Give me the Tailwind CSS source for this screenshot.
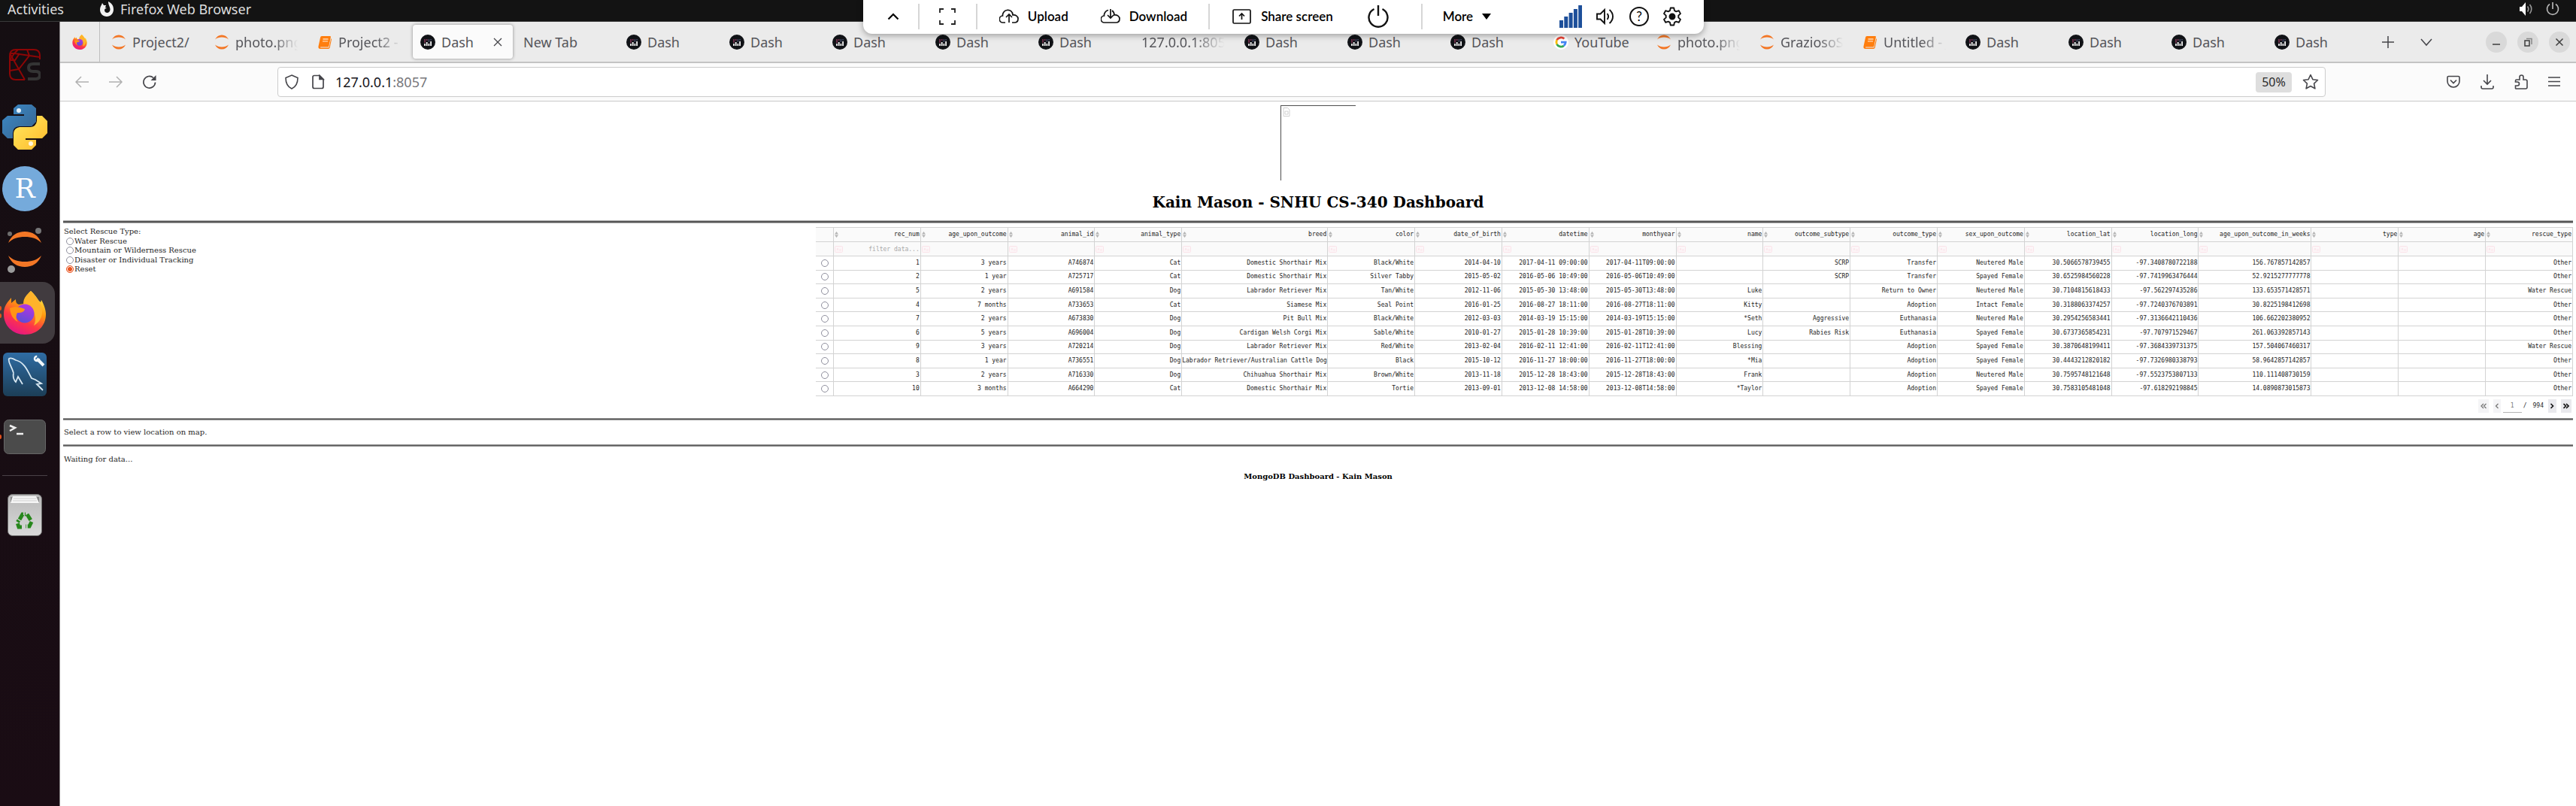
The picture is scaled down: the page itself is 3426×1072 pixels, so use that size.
<!DOCTYPE html>
<html lang="en">
<head>
<meta charset="utf-8">
<title>Dash</title>
<script src="https://cdn.jsdelivr.net/npm/@tailwindcss/browser@4"></script>
</head>
<body class="bg-white">
<svg class="absolute size-0" aria-hidden="true">
  <defs>
    <linearGradient id="flame" x1="0.8" y1="0" x2="0.3" y2="1"><stop offset="0" stop-color="#fff44f"/><stop offset=".4" stop-color="#ff980e"/><stop offset=".7" stop-color="#ff3647"/><stop offset="1" stop-color="#e31587"/></linearGradient>
    <linearGradient id="globe" x1="0.7" y1="0" x2="0.3" y2="1"><stop offset="0" stop-color="#b833e1"/><stop offset="1" stop-color="#5a4fd6"/></linearGradient>
    <linearGradient id="pyb" x1="0" y1="0" x2="1" y2="1"><stop offset="0" stop-color="#3b8ac8"/><stop offset="1" stop-color="#38628c"/></linearGradient>
    <linearGradient id="pyy" x1="0" y1="0" x2="1" y2="1"><stop offset="0" stop-color="#ffe960"/><stop offset="1" stop-color="#ffb92a"/></linearGradient>
    <linearGradient id="sea" x1="0" y1="0" x2="0" y2="1"><stop offset="0" stop-color="#2f6ca3"/><stop offset="1" stop-color="#1c3e57"/></linearGradient>
    <linearGradient id="bin" x1="0" y1="0" x2="0" y2="1"><stop offset="0" stop-color="#b9b9b9"/><stop offset="1" stop-color="#d9d9d9"/></linearGradient>
  </defs>
  <symbol id="firefox" viewBox="0 0 56 58">
    <path fill="url(#flame)" d="M36 0c8 7 9 12 13 15l1-3c4 7 6 14 6 19 0 16-12 27-28 27S0 46 0 31c0-9 3-13 5-16l5-6v7l6-5c0 4 1 6 4 7l6-1C26 9 31 5 36 0z"/>
    <path fill="#ffb32b" d="M36 0c8 8 9 12 12 16 7 14 1 25-8 30 4-9 1-16-1-20l-12-8C26 9 31 5 36 0z"/>
    <circle cx="28" cy="30" r="12.500" fill="url(#globe)"/>
    <path fill="#ff9414" d="M8 23c6-3 14-2 20 1-1 5-7 5-10 5-2 4-2 8 1 12-7-3-10-10-11-18z"/>
  </symbol>
  <symbol id="jupyter" viewBox="0 0 20 20"><path fill="#f37726" d="M1 6.500C3 2.500 6 .5 10 .5s7 2 9 6C16.500 4.500 13.500 3.600 10 3.600S3.500 4.500 1 6.500zM1 13.500c2 4 5 6 9 6s7-2 9-6c-2.500 2-5.500 2.900-9 2.900S3.500 15.500 1 13.500z"/></symbol>
  <symbol id="book" viewBox="0 0 20 20"><path fill="#ff7e0e" d="M6 2h11c1 0 1 .8.900 1.300L15.500 15c-.2.900-.6 1.500-1.500 1.500H4.500c-.8 0-.8 1 0 1h9.700c1 0 1.500-.5 1.700-1.500L18.300 5c.8 1 .7 1.500.5 2.300l-2 9.700c-.3 1.300-1 2-2.300 2H4c-2 0-3-1.300-2.500-3.500L4 4c.3-1.300.8-2 2-2z"/><path stroke="#ffd9b5" stroke-width="1.300" d="M7.500 6h7M7 8.800h7"/></symbol>
  <symbol id="dash" viewBox="0 0 20 20"><circle cx="10" cy="10" r="10" fill="#111317"/><path stroke="#fff" stroke-width="1.700" d="M6 15v-3M8.700 15v-5M11.400 15v-3M14.100 15V9"/><path stroke="#7c3553" stroke-width="1.600" d="M6 11V6M8.700 8V6"/><path stroke="#3e4660" stroke-width="1.600" d="M11.400 10V6M14.100 8V6"/></symbol>
  <symbol id="google" viewBox="0 0 20 20"><circle cx="10" cy="10" r="10" fill="#fff"/><g fill="none" stroke-width="2.800"><path stroke="#ea4335" d="M4.600 7.200A6.200 6.200 0 0 1 14.300 5.600"/><path stroke="#fbbc05" d="M4.600 12.800a6.200 6.200 0 0 1 0-5.600"/><path stroke="#34a853" d="M13.800 14.900a6.200 6.200 0 0 1-9.200-2.100"/><path stroke="#4285f4" d="M10 10.200h6.200a6.200 6.200 0 0 1-2.400 4.700"/></g></symbol>
  <symbol id="aa" viewBox="0 0 11 9"><rect x=".5" y=".5" width="10" height="8" rx="1" fill="#fcf6f8" stroke="#fbe3e9"/><path stroke="#fae6eb" fill="none" d="M3 6l1-3 1 3M6.500 5h2v1h-2z"/></symbol>
  <symbol id="sort" viewBox="0 0 5 8"><path fill="#b4b4b4" d="M2.500 0L5 3.500H0zM2.500 8L5 4.500H0z"/></symbol>
</svg>

<div class="flex min-h-screen flex-col font-['Noto_Sans',sans-serif]">
  <header class="flex h-[29px] items-center border-b border-[#3a3a3a] bg-[#131313] pb-1 pl-[10px] pr-[22px] text-lg leading-6 text-[#dedede]">
    <button class="w-[122px] text-left">Activities</button>
    <button class="flex items-center gap-2">
      <svg class="size-5" viewBox="0 0 20 20"><path fill="#f2f2f2" d="M12 0c4 2 7 5 7 10.500C19 16 15 20 10 20S1 16 1 11c0-3 1-5 2-6.500L4 2l2 3 3 0-1 3 2 1c-2 0-3 1-3 2.500C7 13.500 8.500 15 10.500 15s4-1.700 4-4.500C14.500 7 12 5 12 0z"/></svg>
      Firefox Web Browser
    </button>
    <div class="ml-auto flex items-center gap-4">
      <svg class="size-5" viewBox="0 0 20 20" fill="none" stroke="#9a9a9a" stroke-width="1.600"><path fill="#fff" stroke="none" d="M1 7h3l5-6v18l-5-6H1z"/><path d="M11.500 6.500c1.500 2 1.500 5 0 7M14.500 4c3 3.500 3 8.500 0 12"/></svg>
      <svg class="size-[18px]" viewBox="0 0 18 18" fill="none" stroke="#b5b5b5" stroke-width="1.700"><path d="M9 0v9M5 2.500a7.500 7.500 0 1 0 8 0"/></svg>
    </div>
  </header>

  <div class="flex flex-1">
    <nav aria-label="Dock" class="w-20 shrink-0 border-r border-[#8d898b] bg-linear-to-b from-[#150e12] to-[#1a0c14]">
      <div class="flex h-[593px] w-[66px] flex-col pt-4">
        <button aria-label="Spyder" class="grid flex-1 place-items-center"><svg class="size-[42px]" viewBox="0 0 42 42" fill="none" stroke="#8c0606" stroke-width="2"><path d="M21 41H9q-8 0-8-8V9q0-8 8-8h24q8 0 8 8v5"/><path d="M1 6l6 0 34 5M7 6l5-5M7 6l-6 9M1 6l20 35M1 15l7 0L14 6M13 27L27 9 24 1M13 27L1 29"/><path stroke="#343434" stroke-width="4" d="M41 20H32q-6 0-6 5t6 5h4q5 0 5 5t-6 5H25"/></svg></button>
        <button aria-label="Python" class="grid flex-1 place-items-center"><svg class="size-[60px]" viewBox="0 0 60 60"><path fill="url(#pyb)" d="M21 0h18l6 5v18l-6 6H22q-8 1-8 9v7H7l-7-7V21l7-6h22v-2H15V5z"/><path fill="url(#pyy)" d="M39 60H21l-6-6V38q1-7 8-8h15q7-1 8-8v-7h7l7 7v16l-7 7H31v2h14v7z"/><circle cx="22" cy="8" r="3" fill="#e6f2fa"/><circle cx="38" cy="52" r="3" fill="#fff6dc"/></svg></button>
        <button aria-label="RStudio" class="grid flex-1 place-items-center"><span class="grid size-[60px] place-items-center rounded-full bg-[#75aadb] font-['DejaVu_Serif',serif] text-4xl text-white">R</span></button>
        <button aria-label="Jupyter" class="grid flex-1 place-items-center"><svg class="h-[60px] w-[46px]" viewBox="0 0 46 60"><path fill="#f37726" d="M1 20C5 10 13 5 23 5s18 5 22 15C39 14 32 12 23 12S7 14 1 20zM1 37c4 10 12 15 22 15s18-5 22-15c-6 6-13 8-22 8S7 43 1 37z"/><circle cx="3" cy="8" r="3" fill="#6e6e6e"/><circle cx="41" cy="4" r="4" fill="#767677"/><circle cx="5" cy="55" r="5" fill="#9a9a9a"/></svg></button>
        <button aria-label="Firefox" class="relative grid w-[73px] flex-1 place-items-center rounded-r-2xl bg-[#413b3f] pr-[7px]"><svg class="h-[58px] w-14"><use href="#firefox"/></svg><span class="absolute left-0 top-8 h-1.5 w-0.5 rounded-r bg-[#e2521d]"></span><span class="absolute left-0 top-[42px] h-1.5 w-0.5 rounded-r bg-[#e2521d]"></span></button>
        <button aria-label="MySQL Workbench" class="grid flex-1 place-items-center"><svg class="size-[58px]" viewBox="0 0 58 58"><rect width="58" height="58" rx="6" fill="url(#sea)"/><path fill="none" stroke="#d8e8f2" stroke-width="1.800" d="M14 27C11 17 6 12 8 8c3-2 6 0 9 2 12 3 16 15 21 24l5 2 8 5-6 1 8 8M14 27c-1 5 0 9 3 12l3-7 6 10"/><path stroke="#f1f7fb" stroke-width="4" d="M45 8l9 9"/><circle cx="45" cy="8" r="3" fill="none" stroke="#f1f7fb" stroke-width="2.500" stroke-dasharray="14 5"/></svg></button>
        <button aria-label="Terminal" class="relative grid flex-1 place-items-center"><svg class="h-[46px] w-14" viewBox="0 0 56 46"><rect x=".5" y=".5" width="55" height="45" rx="6" fill="#4b4b4b" stroke="#676767"/><path fill="none" stroke="#f0f0f0" stroke-width="2.500" d="M8 8l7 3-7 4M17 19h9"/></svg><span class="absolute left-0 top-[38px] h-1.5 w-0.5 rounded-r bg-[#e2521d]"></span></button>
      </div>
      <hr class="ml-[3px] mt-[10px] w-[60px] border-[#4a4147]">
      <button aria-label="Trash" class="mt-6 grid w-[66px] place-items-center"><svg class="h-14 w-[46px]" viewBox="0 0 46 56"><rect x=".5" y=".5" width="45" height="55" rx="6" fill="url(#bin)" stroke="#6d6d6d"/><path fill="#8a8a8a" d="M4 4h38v7H4z"/><path fill="#f6f6f6" d="M7 3h31l4 9H4z"/><path stroke="#cfcfcf" d="M8 6h30M7 9h32"/><g fill="none" stroke="#27871c" stroke-width="5"><path d="M16 34l4-7h4M26 27l5 8M32 37l-3 6h-5M19 44h-4l-2-6 2-3" stroke-dasharray="9 2"/></g></svg></button>
    </nav>

    <div class="min-w-0 flex-1">
      <div class="flex h-[55px] items-stretch border-b-2 border-[#c3c3c3] bg-[#ebebeb] text-lg text-[#55555a]">
        <button aria-label="Firefox View" class="grid w-[53px] place-items-center border-r border-[#bdbdbd]"><svg class="size-5"><use href="#firefox"/></svg></button>
        <div id="tabs" role="tablist" class="grid min-w-0 flex-1 auto-cols-fr grid-flow-col pl-[3px]"></div>
        <div class="flex w-[276px] items-center">
          <button aria-label="New tab" class="grid w-[51px] place-items-center"><svg class="size-4" viewBox="0 0 16 16" stroke="#45454a" stroke-width="1.500"><path d="M8 0v16M0 8h16"/></svg></button>
          <button aria-label="List all tabs" class="grid w-[51px] place-items-center"><svg class="h-4 w-4" viewBox="0 0 16 16" fill="none" stroke="#45454a" stroke-width="1.500"><path d="M1 4l7 8 7-8"/></svg></button>
          <div class="ml-auto flex gap-[14px] pr-2">
            <button aria-label="Minimize" class="grid size-7 place-items-center rounded-full bg-[#d9d9d9]"><svg class="size-4" viewBox="0 0 16 16" stroke="#3d3d3d" stroke-width="1.500"><path d="M3 11h10"/></svg></button>
            <button aria-label="Restore" class="grid size-7 place-items-center rounded-full bg-[#d9d9d9]"><svg class="size-4" viewBox="0 0 16 16" fill="none" stroke="#3d3d3d" stroke-width="1.500"><path d="M4 6h6v7H4z"/><path stroke="#888" d="M6 3.500h7V11"/></svg></button>
            <button aria-label="Close" class="grid size-7 place-items-center rounded-full bg-[#d9d9d9]"><svg class="size-4" viewBox="0 0 16 16" stroke="#3d3d3d" stroke-width="1.500"><path d="M3.500 3.500l9 9M12.500 3.500l-9 9"/></svg></button>
          </div>
        </div>
      </div>

      <div class="flex h-[51px] items-center border-b border-[#c9c9c9] bg-[#fbfbfb]">
        <div class="flex w-[289px] items-center gap-[27px] pl-5">
          <button aria-label="Back"><svg class="size-[18px]" viewBox="0 0 18 18" fill="none" stroke="#b0b0b0" stroke-width="1.500"><path d="M18 9H1M8 2L1 9l7 7"/></svg></button>
          <button aria-label="Forward"><svg class="size-[18px]" viewBox="0 0 18 18" fill="none" stroke="#b0b0b0" stroke-width="1.500"><path d="M0 9h17M10 2l7 7-7 7"/></svg></button>
          <button aria-label="Reload"><svg class="size-[18px]" viewBox="0 0 18 18" fill="none" stroke="#45454a" stroke-width="1.700"><path d="M16.500 9.500A7.800 7.800 0 1 1 14 3.500"/><path fill="#45454a" stroke="none" d="M17.500 0v7h-7z"/></svg></button>
        </div>
        <form class="flex h-10 min-w-0 flex-1 items-center rounded border border-[#cccccc] bg-white pl-2 pr-2">
          <svg class="mr-4 size-5 shrink-0" viewBox="0 0 20 20" fill="none" stroke="#45454a" stroke-width="1.600"><path d="M10 1l8 3.500C18 12 15.500 16.500 10 19 4.500 16.500 2 12 2 4.500z"/></svg>
          <svg class="mr-[14px] h-5 w-[18px] shrink-0" viewBox="0 0 18 20" fill="none" stroke="#45454a" stroke-width="1.700"><path d="M11 1.500H4q-2 0-2 2v13q0 2 2 2h10q2 0 2-2v-10z"/><path fill="#45454a" d="M11 1.500v5h5z"/></svg>
          <div class="relative flex h-full min-w-0 flex-1 items-center">
            <input aria-label="Address" value="127.0.0.1:8057" class="h-full w-full text-lg text-transparent caret-black outline-none">
            <span aria-hidden="true" class="pointer-events-none absolute left-0 text-lg text-[#15141a]">127.0.0.1<span class="text-[#77777b]">:8057</span></span>
          </div>
          <button class="mr-[14px] h-[27px] w-12 rounded bg-[#dedede] text-base leading-6 text-[#2b2b2b]">50%</button>
          <button aria-label="Bookmark"><svg class="block size-[22px]" viewBox="0 0 22 22" fill="none" stroke="#45454a" stroke-width="1.600" stroke-linejoin="round"><path d="M11 1.500l2.900 6.200 6.600.8-4.900 4.600 1.300 6.700L11 16.500l-5.900 3.300 1.300-6.700L1.500 8.500l6.600-.8z"/></svg></button>
        </form>
        <div class="flex w-[333px] items-center justify-end gap-[27px] pr-[21px]">
          <button aria-label="Pocket"><svg class="size-[18px]" viewBox="0 0 18 18" fill="none" stroke="#45454a" stroke-width="1.600"><path d="M2.500 1.500h13q1.500 0 1.500 1.500v5a8 8 0 0 1-16 0V3q0-1.500 1.500-1.500z"/><path d="M5 6.500L9 10.500l4-4"/></svg></button>
          <button aria-label="Downloads"><svg class="h-5 w-[18px]" viewBox="0 0 18 20" fill="none" stroke="#45454a" stroke-width="1.600"><path d="M9 0v13M4 8l5 5 5-5M1 15v2q0 2 2 2h12q2 0 2-2v-2"/></svg></button>
          <button aria-label="Extensions"><svg class="h-5 w-[18px]" viewBox="0 0 18 20" fill="none" stroke="#45454a" stroke-width="1.600"><path d="M2 19h13q2 0 2-2V9q0-2-2-2h-3V3.500a2.500 2.500 0 0 0-5 0V7H3Q1.500 7 1.500 8.500V10H4a2 2 0 0 1 0 5H1.500v3.500z"/></svg></button>
          <button aria-label="Menu"><svg class="h-[18px] w-4" viewBox="0 0 16 18" stroke="#45454a" stroke-width="1.600"><path d="M0 3h16M0 8.500h16M0 14h16"/></svg></button>
        </div>
      </div>

      <main class="mx-1 font-['DejaVu_Serif',serif] text-[10px] leading-3 text-[#1f1f1f]">
        <div role="img" aria-label="Missing picture" class="mx-auto mt-[5px] size-[100px] border-l border-t border-[#4e4e4e] p-[2px]">
          <svg class="h-3 w-[10px]" viewBox="0 0 10 12" fill="none" stroke="#d0d0d0"><path d="M1 .5h5.500L9 3v8.500H1zM3 5h4v4H3z"/></svg>
        </div>
        <h1 class="mt-[15px] text-center text-xl leading-7 font-bold text-black">Kain Mason - SNHU CS-340 Dashboard</h1>
        <hr class="mt-[10px] h-1 border-t border-b border-[#a8a8a8] bg-[#555555]">

        <div class="flex">
          <div role="radiogroup" aria-labelledby="rescue" class="w-[30%] pt-[5px] pl-px">
            <div class="flex h-[62px] flex-col justify-between">
              <div id="rescue">Select Rescue Type:</div>
              <label class="flex items-center gap-px pl-[3px]"><input type="radio" name="t" class="size-[10px] appearance-none rounded-full border border-[#8f8f9d] bg-white">Water Rescue</label>
              <label class="flex items-center gap-px pl-[3px]"><input type="radio" name="t" class="size-[10px] appearance-none rounded-full border border-[#8f8f9d] bg-white">Mountain or Wilderness Rescue</label>
              <label class="flex items-center gap-px pl-[3px]"><input type="radio" name="t" class="size-[10px] appearance-none rounded-full border border-[#8f8f9d] bg-white">Disaster or Individual Tracking</label>
              <label class="flex items-center gap-px pl-[3px]"><input type="radio" name="t" checked class="size-[10px] appearance-none rounded-full border border-[#e95420] bg-[#e95420] shadow-[inset_0_0_0_1px_white]">Reset</label>
            </div>
          </div>

          <div class="w-[70%] pt-[5px]">
            <table class="h-[225px] w-full table-fixed border-collapse border-y border-r border-[#d3d3d3] text-right font-['DejaVu_Sans_Mono',monospace] text-[8px] leading-[10px] whitespace-nowrap text-[#222222]">
              <colgroup id="cols"></colgroup>
              <thead id="head" class="bg-[#fafafa]"></thead>
              <tbody id="rows"></tbody>
            </table>
            <div class="mt-1 flex h-[18px] items-center justify-end pr-[2px] font-['DejaVu_Sans_Mono',monospace] text-[8px] leading-[10px]">
              <button aria-label="First page" class="grid h-[18px] w-[14px] place-items-center bg-[#f4f4f6]"><svg class="size-2" viewBox="0 0 8 8" fill="none" stroke="#777" stroke-width="1.300"><path d="M4 1L1 4l3 3M7.500 1l-3 3 3 3"/></svg></button>
              <button aria-label="Previous page" class="ml-1.5 grid h-[18px] w-[10px] place-items-center bg-[#f4f4f6]"><svg class="size-2" viewBox="0 0 8 8" fill="none" stroke="#777" stroke-width="1.300"><path d="M5.500 1l-3 3 3 3"/></svg></button>
              <input aria-label="Page" placeholder="1" class="ml-[3px] h-[18px] w-[25px] border-b border-[#b5b5b5] text-center outline-none placeholder:text-[#777777]">
              <span class="ml-[2px]">/</span><span class="ml-2">994</span>
              <button aria-label="Next page" class="ml-1.5 grid h-[18px] w-[11px] place-items-center bg-[#e9e9ed]"><svg class="size-2" viewBox="0 0 8 8" fill="none" stroke="#111" stroke-width="1.600"><path d="M2.500 1l3 3-3 3"/></svg></button>
              <button aria-label="Last page" class="ml-1.5 grid h-[18px] w-[14px] place-items-center bg-[#e9e9ed]"><svg class="size-2" viewBox="0 0 8 8" fill="none" stroke="#111" stroke-width="1.600"><path d="M.5 1l3 3-3 3M4 1l3 3-3 3"/></svg></button>
            </div>
          </div>
        </div>

        <hr class="mt-[7px] h-[3px] border-t border-b border-[#8e8e8e] bg-[#5c5c5c]">
        <p class="py-[10px] pl-px">Select a row to view location on map.</p>
        <hr class="h-[3px] border-t border-b border-[#8e8e8e] bg-[#5c5c5c]">
        <p class="pt-[11px] pl-px">Waiting for data...</p>
        <p class="pt-[11px] text-center font-bold text-black">MongoDB Dashboard - Kain Mason</p>
      </main>
    </div>
  </div>
</div>

<div class="pointer-events-none absolute inset-x-0 top-0 flex justify-center pr-3">
  <div class="pointer-events-auto flex h-[45px] items-center rounded-b-xl bg-white pb-0.5 pl-8 pr-[29px] font-['Lato',sans-serif] text-[17px] leading-6 font-semibold text-black shadow-[0_2px_8px_rgba(0,0,0,0.35)]">
    <button aria-label="Collapse"><svg class="block size-4" viewBox="0 0 16 16" fill="none" stroke="#000" stroke-width="2.200"><path d="M1.500 11.500L8 5l6.500 6.500"/></svg></button>
    <span class="ml-[25px] h-[34px] w-0.5 bg-[#d6d6d6]"></span>
    <button aria-label="Full screen" class="ml-[26px]"><svg class="block size-[22px]" viewBox="0 0 22 22" fill="none" stroke="#222" stroke-width="1.800"><path d="M1 6V1h5M16 1h5v5M21 16v5h-5M6 21H1v-5"/></svg></button>
    <span class="ml-[27px] h-[34px] w-0.5 bg-[#d6d6d6]"></span>
    <button class="ml-[29px] flex items-center gap-3"><svg class="h-5 w-[26px]" viewBox="0 0 26 20" fill="none" stroke="#111" stroke-width="1.700"><path d="M8 18H5A4.500 4.500 0 0 1 4.500 9 7 7 0 0 1 10 1.500c4-1 8 2 8 6.500 4-.5 7 2 7 5s-2 5-5 5h-3M13 18V7M9 11l4-4 4 4"/></svg>Upload</button>
    <button class="ml-[43px] flex items-center gap-3"><svg class="h-5 w-[26px]" viewBox="0 0 26 20" fill="none" stroke="#111" stroke-width="1.700"><path d="M10 1.500A7 7 0 0 0 4.500 9 4.500 4.500 0 0 0 5 18h15c3 0 5-2 5-5s-3-5.500-7-5c0-2.500-1-4.500-3-6M13 0v12M9 8l4 4 4-4"/></svg>Download</button>
    <span class="ml-7 h-[34px] w-0.5 bg-[#d6d6d6]"></span>
    <button class="ml-[30px] flex items-center gap-3"><svg class="h-5 w-[26px]" viewBox="0 0 26 20" fill="none" stroke="#111" stroke-width="1.700"><rect x="1" y="1" width="23" height="18" rx="1.500"/><path d="M12.500 14V6M9 9.500L12.500 6 16 9.500"/></svg>Share screen</button>
    <button aria-label="Power" class="ml-[46px]"><svg class="block h-8 w-7" viewBox="0 0 28 32" fill="none" stroke="#111" stroke-width="2.400"><path d="M14 1v14M8.500 6a12.500 12.500 0 1 0 11 0"/></svg></button>
    <span class="ml-[43px] h-[34px] w-0.5 bg-[#d6d6d6]"></span>
    <button class="ml-[27px] flex items-center gap-3">More<svg class="h-2 w-3" viewBox="0 0 12 8"><path d="M0 0h12L6 8z"/></svg></button>
    <svg role="img" aria-label="Signal" class="ml-[91px] h-[30px] w-[30px]" viewBox="0 0 30 30" fill="#1d4f9a"><path d="M0 20h5v10H0zM6.300 15h5v15h-5zM12.600 10h5v20h-5zM18.900 5h5v25h-5zM25.200 0h5v30h-5z"/></svg>
    <button aria-label="Sound" class="ml-[19px]"><svg class="block size-6" viewBox="0 0 24 24" fill="none" stroke="#111" stroke-width="1.900"><path d="M1 8.500h4.500L11 3v18l-5.500-5.500H1zM14.500 8c2 2.500 2 5.500 0 8M17.500 3c6 5 6 13 0 18"/></svg></button>
    <button aria-label="Help" class="ml-5 grid size-[26px] place-items-center rounded-full border-2 border-[#111111] text-[17px] leading-5 font-normal">?</button>
    <button aria-label="Settings" class="ml-[18px]"><svg class="block size-[26px]" viewBox="0 0 26 26" fill="none" stroke="#111" stroke-width="1.900" stroke-linejoin="round"><path d="M10.800 1.500h4.400l.8 3.600 2.300 1.300 3.500-1.200 2.200 3.900-2.700 2.500v2.800l2.700 2.500-2.200 3.900-3.500-1.200-2.300 1.300-.8 3.600h-4.400l-.8-3.600-2.300-1.300-3.500 1.200L2 16.900l2.700-2.500v-2.800L2 9.100l2.200-3.900 3.500 1.200L10 5.100z"/><circle cx="13" cy="13" r="3.500" fill="#111"/></svg></button>
  </div>
</div>

<script>
const icon = n => n ? `<svg class="size-5 shrink-0"><use href="#${n}"/></svg>` : '';
const tabs = [['jupyter','Project2/'],['jupyter','photo.png'],['book','Project2 - J'],['dash','Dash'],['','New Tab'],['dash','Dash'],['dash','Dash'],['dash','Dash'],['dash','Dash'],['dash','Dash'],['','127.0.0.1:8057'],['dash','Dash'],['dash','Dash'],['dash','Dash'],['google','YouTube'],['jupyter','photo.png'],['jupyter','GraziosoSalvare'],['book','Untitled - J'],['dash','Dash'],['dash','Dash'],['dash','Dash'],['dash','Dash']];
document.getElementById('tabs').innerHTML = tabs.map(([i, t], k) => k === 3
  ? `<button role="tab" aria-selected="true" class="my-1 mx-0.5 flex min-w-0 items-center gap-2 rounded bg-[#fbfbfb] pl-[10px] pr-[14px] shadow-[0_0_4px_rgba(0,0,0,0.4)]">${icon(i)}<span class="min-w-0 flex-1 text-left">${t}</span><svg class="size-3" viewBox="0 0 12 12" stroke="#45454a" stroke-width="1.300"><path d="M1 1l10 10M11 1L1 11"/></svg></button>`
  : `<button role="tab" class="flex min-w-0 items-center gap-2 px-3">${icon(i)}<span class="min-w-0 flex-1 overflow-hidden text-left whitespace-nowrap ${t.length > 8 && t !== 'Project2/' ? '[mask-image:linear-gradient(to_right,black_60%,transparent_98%)]' : ''}">${t}</span></button>`).join('');

const names = ['rec_num','age_upon_outcome','animal_id','animal_type','breed','color','date_of_birth','datetime','monthyear','name','outcome_subtype','outcome_type','sex_upon_outcome','location_lat','location_long','age_upon_outcome_in_weeks','type','age','rescue_type'];
const data = `1|3 years|A746874|Cat|Domestic Shorthair Mix|Black/White|2014-04-10|2017-04-11 09:00:00|2017-04-11T09:00:00||SCRP|Transfer|Neutered Male|30.5066578739455|-97.3408780722188|156.767857142857|||Other
2|1 year|A725717|Cat|Domestic Shorthair Mix|Silver Tabby|2015-05-02|2016-05-06 10:49:00|2016-05-06T10:49:00||SCRP|Transfer|Spayed Female|30.6525984560228|-97.7419963476444|52.9215277777778|||Other
5|2 years|A691584|Dog|Labrador Retriever Mix|Tan/White|2012-11-06|2015-05-30 13:48:00|2015-05-30T13:48:00|Luke||Return to Owner|Neutered Male|30.7104815618433|-97.562297435286|133.653571428571|||Water Rescue
4|7 months|A733653|Cat|Siamese Mix|Seal Point|2016-01-25|2016-08-27 18:11:00|2016-08-27T18:11:00|Kitty||Adoption|Intact Female|30.3188063374257|-97.7240376703891|30.8225198412698|||Other
7|2 years|A673830|Dog|Pit Bull Mix|Black/White|2012-03-03|2014-03-19 15:15:00|2014-03-19T15:15:00|*Seth|Aggressive|Euthanasia|Neutered Male|30.2954256583441|-97.3136642110436|106.662202380952|||Other
6|5 years|A696004|Dog|Cardigan Welsh Corgi Mix|Sable/White|2010-01-27|2015-01-28 10:39:00|2015-01-28T10:39:00|Lucy|Rabies Risk|Euthanasia|Spayed Female|30.6737365854231|-97.707971529467|261.063392857143|||Other
9|3 years|A720214|Dog|Labrador Retriever Mix|Red/White|2013-02-04|2016-02-11 12:41:00|2016-02-11T12:41:00|Blessing||Adoption|Spayed Female|30.3870648199411|-97.3684339731375|157.504067460317|||Water Rescue
8|1 year|A736551|Dog|Labrador Retriever/Australian Cattle Dog|Black|2015-10-12|2016-11-27 18:00:00|2016-11-27T18:00:00|*Mia||Adoption|Spayed Female|30.4443212820182|-97.7326980338793|58.9642857142857|||Other
3|2 years|A716330|Dog|Chihuahua Shorthair Mix|Brown/White|2013-11-18|2015-12-28 18:43:00|2015-12-28T18:43:00|Frank||Adoption|Neutered Male|30.7595748121648|-97.5523753807133|110.111408730159|||Other
10|3 months|A664290|Cat|Domestic Shorthair Mix|Tortie|2013-09-01|2013-12-08 14:58:00|2013-12-08T14:58:00|*Taylor||Adoption|Spayed Female|30.7583105481048|-97.618292198845|14.0890873015873|||Other`.split('\n').map(r => r.split('|'));
document.getElementById('cols').innerHTML = '<col class="w-[23px]">' + names.map(n => n === 'breed' ? '<col class="w-[194px]">' : n === 'age_upon_outcome_in_weeks' ? '<col class="w-[150px]">' : '<col>').join('');
document.getElementById('head').innerHTML =
  '<tr class="h-[19px]"><td class="border-r border-b border-[#d3d3d3]"></td>' + names.map(n => `<th class="border-r border-b border-[#d3d3d3] py-0 pl-px pr-px font-normal"><div class="flex items-center justify-between"><button aria-label="Sort"><svg class="block h-2 w-[5px]"><use href="#sort"/></svg></button>${n}</div></th>`).join('') + '</tr>' +
  '<tr class="h-[19px]"><td class="border-r border-b border-[#d3d3d3]"></td>' + names.map((n, i) => `<td class="border-b border-r border-[#d3d3d3] py-0 pl-px pr-px"><div class="flex items-center"><button aria-label="Toggle case"><svg class="block h-[9px] w-[11px]"><use href="#aa"/></svg></button><input aria-label="Filter ${n}" ${i ? '' : 'placeholder="filter data..."'} class="h-3 min-w-0 flex-1 text-right outline-none placeholder:text-[#a8a8a8]"></div></td>`).join('') + '</tr>';
document.getElementById('rows').innerHTML = data.map(r => '<tr><td class="border-r border-b border-[#d3d3d3] p-0"><input type="radio" name="row" aria-label="Select row" class="mx-auto block size-[10px] appearance-none rounded-full border border-[#8f8f9d]"></td>' + r.map(c => `<td class="border-r border-b border-[#d3d3d3] py-0 pl-0 pr-px">${c}</td>`).join('') + '</tr>').join('');
</script>
</body>
</html>
